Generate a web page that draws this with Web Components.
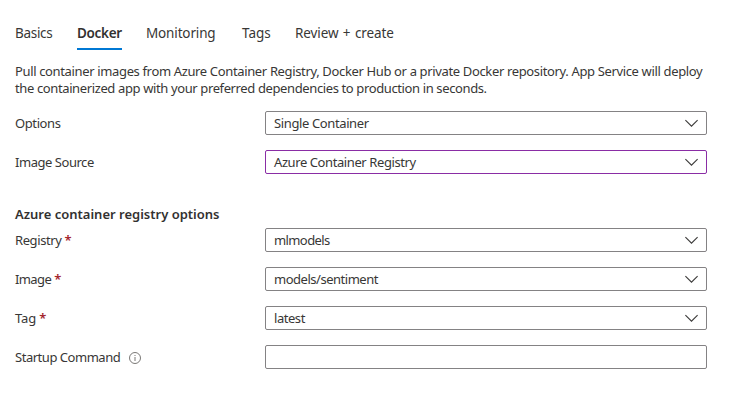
<!DOCTYPE html>
<html lang="en"><head><meta charset="utf-8"><title>Docker settings</title>
<style>body{margin:0;background:#fff;color:#383736;font:13px/17px "Noto Sans",sans-serif}</style></head><body>
<docker-page></docker-page>
<script>
class TabItem extends HTMLElement{constructor(){super();this.attachShadow({mode:'open'}).innerHTML=`<style>:host{display:block;box-sizing:border-box;height:25px;font-size:13.5px;white-space:nowrap}:host([active]){font-size:13.5px;letter-spacing:-.3px;font-weight:600;border-bottom:2px solid #0078d4;color:#323130}</style><slot></slot>`}}
customElements.define('tab-item',TabItem);
class FormRow extends HTMLElement{constructor(){super();this.attachShadow({mode:'open'}).innerHTML=`<style>:host{display:grid;grid-template-columns:250px 442px;height:24px;align-items:center}.l{display:flex;align-items:center;white-space:pre;letter-spacing:var(--label-spacing,-.4px)}b{color:#a4262c;font-weight:600;letter-spacing:0;margin-left:3px}svg{margin:1px 0 0 9px}</style><div class="l"><span>${this.getAttribute('label')}</span>${this.hasAttribute('required')?'<b>*</b>':''}${this.hasAttribute('info')?'<svg width="12" height="12" viewBox="0 0 12 12" fill="none" stroke="#6b6967"><circle cx="6" cy="6" r="5.5" stroke-width=".9"/><path d="M6 5v4M6 3v1" stroke-width=".9"/></svg>':''}</div><slot></slot>`}}
customElements.define('form-row',FormRow);
class SelectBox extends HTMLElement{constructor(){super();this.attachShadow({mode:'open'}).innerHTML=`<style>:host{display:flex;box-sizing:border-box;height:24px;border:1px solid #848284;border-radius:2px;align-items:center;justify-content:space-between;padding:0 8px;letter-spacing:-.38px}:host([changed]){border-color:#8a2da5}</style><slot></slot>${this.hasAttribute('plain')?'':'<svg width="14" height="8" viewBox="0 0 14 8" fill="none" stroke="#3b3a39" stroke-width="1.1"><path d="M1.400 1.200 7.500 7.200 13.600 1.200"/></svg>'}`}}
customElements.define('select-box',SelectBox);
class DockerPage extends HTMLElement{constructor(){super();this.attachShadow({mode:'open'}).innerHTML=`<style>:host{display:block;box-sizing:border-box;padding:25px 15px;height:409px}nav{display:grid;grid-template-columns:38px 45px 72px 29px 110px;gap:24px}p{margin:13px 0 14px;white-space:nowrap;letter-spacing:-.355px}.g{display:grid;gap:15px}h2{font-size:13px;line-height:17px;font-weight:600;margin:32px 0 5px;color:#323130}</style><nav><tab-item style="letter-spacing:-.3px">Basics</tab-item><tab-item active>Docker</tab-item><tab-item style="letter-spacing:-.15px">Monitoring</tab-item><tab-item>Tags</tab-item><tab-item style="letter-spacing:-.1px;word-spacing:1px">Review + create</tab-item></nav><p>Pull container images from Azure Container Registry, Docker Hub or a private Docker repository. App Service will deploy<br><span style="letter-spacing:-.38px">the containerized app with your preferred dependencies to production in seconds.</span></p><div class="g"><form-row label="Options"><select-box>Single Container</select-box></form-row><form-row label="Image Source" style="--label-spacing:-.46px"><select-box changed style="letter-spacing:-.41px">Azure Container Registry</select-box></form-row></div><h2>Azure container registry options</h2><div class="g"><form-row label="Registry" required><select-box style="letter-spacing:-.6px">mlmodels</select-box></form-row><form-row label="Image" required style="--label-spacing:-.6px"><select-box style="letter-spacing:-.48px">models/sentiment</select-box></form-row><form-row label="Tag" required style="--label-spacing:-.1px"><select-box style="letter-spacing:-.45px">latest</select-box></form-row><form-row label="Startup Command" info style="--label-spacing:-.47px"><select-box plain></select-box></form-row></div>`}}
customElements.define('docker-page',DockerPage);
</script></body></html>
